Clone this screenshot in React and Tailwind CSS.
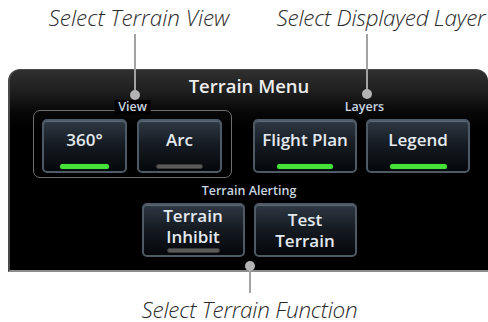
import React from "react";

const ui = { fontFamily: '"Open Sans", "Noto Sans", sans-serif' };

function Bar({ on, w }) {
  return (
    <div
      className={
        on
          ? "h-[5px] rounded-full bg-[#45e03a] shadow-[0_0_1px_#2a9a22]"
          : "h-[5px] rounded-full bg-[#5a5a5a] border border-[#3a3a3a]"
      }
      style={{ width: w }}
    />
  );
}

function Btn({ w, lines, bar, barW }) {
  return (
    <div
      className="relative flex flex-col items-center h-[54px] rounded-[5px] border-2 border-[#4d5965] bg-[linear-gradient(to_bottom,#2f3944_0%,#161c23_45%,#05070a_100%)] shadow-[inset_0_1px_0_#5d6a77]"
      style={{ width: w }}
    >
      {lines.length === 1 ? (
        <div className="pt-[9px] text-[17px] leading-[20px] font-semibold text-[#e4eaf0] whitespace-nowrap">
          {lines[0]}
        </div>
      ) : (
        <div
          className={
            "flex flex-col items-center text-[17px] leading-[21px] font-semibold text-[#e4eaf0] whitespace-nowrap " +
            (bar === undefined ? "flex-1 justify-center" : "pt-[0px]")
          }
        >
          {lines.map((l) => (
            <span key={l} className="block h-[21px]">{l}</span>
          ))}
        </div>
      )}
      {bar !== undefined && (
        <div className="absolute bottom-[2px] left-0 right-0 flex justify-center">
          <Bar on={bar} w={barW} />
        </div>
      )}
    </div>
  );
}

export default function App() {
  return (
    <div className="relative w-[488px] h-[322px] bg-white overflow-hidden" style={ui}>
      {/* top annotations */}
      <div className="flex h-[69px] pt-[6px] text-[22.5px] leading-[24px] italic font-light text-[#2a2a2a]">
        <div className="ml-[39px] w-[200px] text-center whitespace-nowrap">Select Terrain View</div>
        <div className="ml-[35px] w-[214px] text-center whitespace-nowrap tracking-[-0.25px]">Select Displayed Layer</div>
      </div>

      {/* panel */}
      <div className="ml-[8px] w-[480px] h-[203px] box-border rounded-t-[12px] border-t border-l-2 border-b-2 border-t-[#4a4a4a] border-l-[#4a4a4a] border-b-[#8c8c8c] bg-[linear-gradient(to_bottom,#2f2f2f_0px,#1e1e1e_22px,#070707_42px,#000_60px)]">
        <div className="h-[30px] pt-[4px] text-center text-[18.5px] leading-[24px] font-semibold text-[#eeeeee]">
          Terrain Menu
        </div>

        <div className="flex items-start pl-[23px]">
          <div className="relative mt-[10px] w-[199px] h-[68px] box-border rounded-[7px] border border-[#6e6e6e] pt-[8px] pl-[8px]">
            <div className="absolute -top-[11px] left-1/2 -translate-x-1/2 bg-black px-[4px] text-[12.5px] leading-[14px] font-semibold text-[#c9d5e0]">
              View
            </div>
            <div className="flex gap-[10px]">
              <Btn w={85} lines={["360°"]} bar={true} barW={49} />
              <Btn w={85} lines={["Arc"]} bar={false} barW={47} />
            </div>
          </div>

          <div className="ml-[21px] flex flex-col">
            <div className="pl-[6px] text-center text-[12.5px] leading-[14px] font-semibold text-[#c9d5e0]">Layers</div>
            <div className="mt-[5px] flex gap-[9px]">
              <Btn w={104} lines={["Flight Plan"]} bar={true} barW={56} />
              <Btn w={104} lines={["Legend"]} bar={true} barW={57} />
            </div>
          </div>
        </div>

        <div className="mt-[6px] text-center text-[12.5px] leading-[14px] font-semibold text-[#c9d5e0]">
          Terrain Alerting
        </div>
        <div className="mt-[5px] flex justify-center gap-[9px]">
          <Btn w={103} lines={["Terrain", "Inhibit"]} bar={false} barW={53} />
          <Btn w={103} lines={["Test", "Terrain"]} />
        </div>
      </div>

      {/* bottom annotation */}
      <div className="mt-[27px] pl-[11px] text-center text-[22.5px] leading-[22px] italic font-light text-[#2a2a2a] whitespace-nowrap tracking-[-0.22px]">
        Select Terrain Function
      </div>

      {/* callout lines */}
      <div className="absolute left-[134px] top-[34px] w-[2px] h-[60px] bg-[#a3a3a3]" />
      <div className="absolute left-[130px] top-[90px] w-[10px] h-[10px] rounded-full bg-[#b3b3b3]" />
      <div className="absolute left-[366px] top-[34px] w-[2px] h-[59px] bg-[#a3a3a3]" />
      <div className="absolute left-[362px] top-[89px] w-[10px] h-[10px] rounded-full bg-[#b3b3b3]" />
      <div className="absolute left-[249px] top-[266px] w-[2px] h-[27px] bg-[#a3a3a3]" />
      <div className="absolute left-[245px] top-[261px] w-[10px] h-[10px] rounded-full bg-[#b3b3b3]" />
    </div>
  );
}
